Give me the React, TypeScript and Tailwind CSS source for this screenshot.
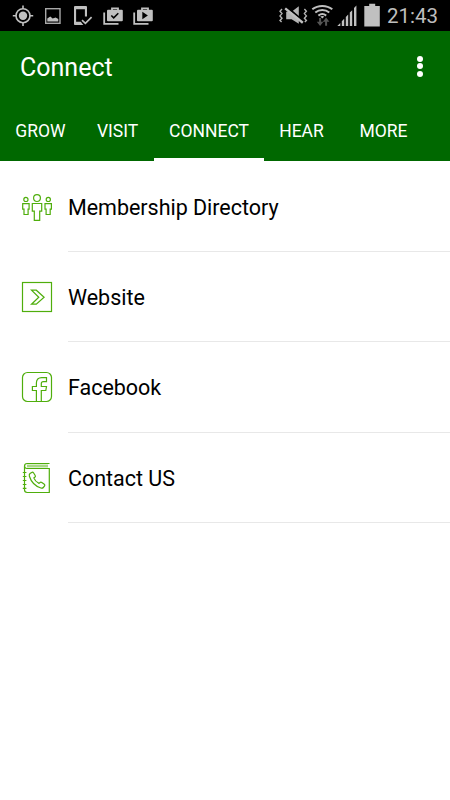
import React, { useState } from 'react'

const tabs = [
  { name: 'GROW', className: 'w-[81px]' },
  { name: 'VISIT', className: 'w-[73px]' },
  { name: 'CONNECT', className: 'w-[110px]' },
  { name: 'HEAR', className: 'w-[75px]' },
  { name: 'MORE', className: 'w-[89px]' },
]

const items = [
  { name: 'Membership Directory', icon: <PeopleIcon /> },
  { name: 'Website', icon: <WebsiteIcon /> },
  { name: 'Facebook', icon: <FacebookIcon /> },
  { name: 'Contact US', icon: <ContactIcon /> },
]

function PeopleIcon() {
  return (
    <svg width="32" height="32" viewBox="0 -0.9 32 32" fill="none" stroke="#4fae0c" strokeWidth="1.2">
      <circle cx="16" cy="7.2" r="3.4" />
      <path d="M11.3 12.6h9.4v7.6h-2v9.2h-5.4v-9.2h-2z" />
      <circle cx="4.9" cy="8.5" r="2.1" />
      <path d="M1.7 12.8h6.4v5.4h-1v5.4H3v-5.4H1.7z" />
      <circle cx="27.3" cy="8.5" r="2.1" />
      <path d="M24 12.8h6.4v5.4h-1.2v5.4h-4.1v-5.4H24z" />
    </svg>
  )
}

function WebsiteIcon() {
  return (
    <svg width="32" height="32" viewBox="0 0 32 32" fill="none" stroke="#4fae0c" strokeWidth="1.2">
      <rect x="1.5" y="1.5" width="29" height="29" />
      <path d="M10.5 9.2h4.8l7.8 7-7.8 7h-4.8l7.3-7z" />
    </svg>
  )
}

function FacebookIcon() {
  return (
    <svg width="32" height="32" viewBox="0 0 32 32" fill="none" stroke="#4fae0c" strokeWidth="1.2">
      <rect x="1.5" y="1.5" width="29" height="29" rx="5" />
      <path d="M15.4 30V19.5h-4v-4h4v-3.6c0-3.4 2-5.3 5.2-5.3h4.9v4.1h-3.2c-1.3 0-2 .6-2 1.9v2.9h5.2l-.7 4h-4.5V30" />
    </svg>
  )
}

function ContactIcon() {
  return (
    <svg width="32" height="32" viewBox="0 0 32 32" fill="none" stroke="#4fae0c" strokeWidth="1.2">
      <path d="M28.5 1.5H6.2C4.5 1.5 3.5 2.7 3.5 4.2v23.6c0 1.6 1 2.7 2.7 2.7h22.1v-24H6C4.5 6.5 3.8 5.6 3.8 4.5" />
      <path d="M6 3.2h21M6 4.8h21" strokeWidth=".7" />
      <path d="M1.8 10.5h3.6M1.8 14.5h3.6M1.8 18.5h3.6M1.8 22.5h3.6M1.8 26.3h3.6" />
      <path d="M9 11.5l1.7-1.1c.7-.4 1.4-.2 1.8.4l1.7 2.7c.4.7.2 1.3-.4 1.7l-1 .7c.9 2.5 2.8 4.4 5.2 5.5l1-.9c.5-.5 1.2-.5 1.8-.1l2.5 1.8c.6.5.7 1.2.3 1.8l-1.3 1.5c-.6.7-1.5.8-2.4.5-5.6-1.9-9.8-6.3-11.5-11.8-.3-1-.2-2 .6-2.7z" />
    </svg>
  )
}

function ShopIcon({ play = false }) {
  return (
    <svg width="20" height="31" viewBox="0 0 20 31" fill="none">
      <path d="M1.2 12.5v11.3h14.3" stroke="#c0c0c0" strokeWidth="1.8" />
      <path d="M9 10V8.4h6V10" stroke="#c0c0c0" strokeWidth="1.8" />
      <rect x="4" y="9.7" width="15.8" height="11.6" rx="1" fill="#c0c0c0" />
      {play ? (
        <path d="M9.3 11.7v7.5l5.6-3.8z" fill="#000" />
      ) : (
        <path d="M8.3 15.5l2.4 2.4 4.6-4.6" stroke="#000" strokeWidth="1.6" />
      )}
    </svg>
  )
}

function StatusBar() {
  return (
    <div className="flex h-[31px] items-center bg-black pl-3">
      <svg width="22" height="31" viewBox="0 0 22 31" fill="none" stroke="#c0c0c0" strokeWidth="1.6">
        <circle cx="11" cy="15.7" r="7" />
        <circle cx="11" cy="15.7" r="4.2" fill="#c0c0c0" stroke="none" />
        <path d="M11 5.5V9M11 22.4v3.5M.8 15.7h3.5M17.7 15.7h3.5" />
      </svg>
      <svg className="ml-[10px]" width="18" height="31" viewBox="0 0 18 31" fill="none">
        <rect x="1.7" y="8.7" width="14.3" height="14.6" stroke="#a8a8a8" strokeWidth="1.4" />
        <path d="M3.3 21.6v-3.2l3-2 2.3 2.2 3-1.2 2.7 1.6v2.6z" fill="#c0c0c0" />
      </svg>
      <svg className="ml-[11px]" width="20" height="31" viewBox="0 0 20 31" fill="#c0c0c0">
        <path fillRule="evenodd" d="M1 7.2C1 6.5 1.5 6 2.2 6h10.6c.7 0 1.2.5 1.2 1.2v9.4h-2.1V9.2H3.1v12.5h4.7l2.5 3.4H2.2C1.5 25.1 1 24.6 1 23.9z" />
        <path d="M9 20.2l3.4 3.2 6.2-6.2" fill="none" stroke="#c0c0c0" strokeWidth="1.7" />
      </svg>
      <div className="ml-[10px] flex gap-[10px]">
        <ShopIcon />
        <ShopIcon play />
      </div>

      <svg className="ml-[125px]" width="30" height="31" viewBox="0 0 30 31" fill="none">
        <path d="M8.2 11.8h5.4l7.2-5.6v17.6l-7.2-4.6H8.2z" fill="#b4b4b4" />
        <path d="M8.8 7l16.5 14" stroke="#000" strokeWidth="2" />
        <path d="M7.2 8.4l17.6 14.4" stroke="#c0c0c0" strokeWidth="2.4" />
        <path d="M4 9l-2 2.3 2 2.3-2 2.3 2 2.3-2 2.3 1.6 1.6M26.4 9l2 2.3-2 2.3 2 2.3-2 2.3 2 2.3-1.6 1.6" stroke="#b4b4b4" strokeWidth="1.4" />
      </svg>
      <svg className="ml-[3px]" width="22" height="31" viewBox="0 0 22 31" fill="none" stroke="#c0c0c0" strokeWidth="2">
        <path d="M1.3 9.3c5.8-4.5 14.2-4.5 20 0M4.3 12.5c4-3.2 10-3.2 14 0M7.4 15.6c2.3-1.8 5.5-1.8 7.8 0" />
        <path d="M9.3 16.6c1.2-.8 2.8-.8 4 0l-2 1.8z" fill="#c0c0c0" stroke="none" />
        <path d="M9.1 18v4.5M15.1 25.8v-5" stroke="#555" strokeWidth="2" />
        <path d="M5.8 21.7h6.6l-3.3 4.2zM11.8 21.7h6.6l-3.3-4.2z" fill="#555" stroke="none" />
      </svg>
      <svg className="ml-[4px]" width="20" height="31" viewBox="0 0 20 31" fill="#c0c0c0">
        <path d="M.3 26l3-3v3zM4.8 26v-4.8l2.4-2.4V26zM8.8 26v-9l2.4-2.4V26zM12.8 26V12.6l2.4-2.4V26zM17 26V8l2.4-2.4V26z" />
      </svg>
      <svg className="ml-[7px]" width="17" height="31" viewBox="0 0 17 31" fill="#c0c0c0">
        <path d="M5.2 3.7h6v2.4h4.6v20.3H.3V6.1h4.9z" />
      </svg>
      <span className="ml-[6px] pt-px text-[20.5px] leading-[31px] text-[#bebebe]">21:43</span>
    </div>
  )
}

export default function App() {
  const [activeTab, setActiveTab] = useState('CONNECT')

  return (
    <div className="flex h-[800px] w-[450px] flex-col overflow-hidden bg-white font-[Roboto,sans-serif]">
      <StatusBar />

      <header className="flex h-[130px] flex-col bg-[#006800] text-white">
        <div className="flex h-[72px] items-center justify-between pr-[27px] pl-5">
          <h1 className="pt-[2px] text-[25px] leading-8">Connect</h1>
          <button className="flex flex-col gap-[1.5px] pb-[2px]" aria-label="menu">
            <span className="h-[6px] w-[6px] rounded-full bg-white" />
            <span className="h-[6px] w-[6px] rounded-full bg-white" />
            <span className="h-[6px] w-[6px] rounded-full bg-white" />
          </button>
        </div>
        <nav className="flex h-[58px]">
          {tabs.map((tab) => (
            <button
              key={tab.name}
              onClick={() => setActiveTab(tab.name)}
              className={`${tab.className} shrink-0 border-b-[3px] pt-[2px] text-center text-[17.5px] ${
                activeTab === tab.name ? 'border-white' : 'border-transparent'
              }`}
            >
              {tab.name}
            </button>
          ))}
        </nav>
      </header>

      <ul className="pt-[0.6px]">
        {items.map((item) => (
          <li key={item.name} className="flex h-[90.4px] pl-[21px]">
            <span className="flex w-[47px] items-center pb-[0.6px]">{item.icon}</span>
            <span className="flex flex-1 items-center border-b border-[#e8e8e8] pt-[2.8px] text-[21.5px] tracking-[-0.03px] text-black">
              {item.name}
            </span>
          </li>
        ))}
      </ul>
    </div>
  )
}
